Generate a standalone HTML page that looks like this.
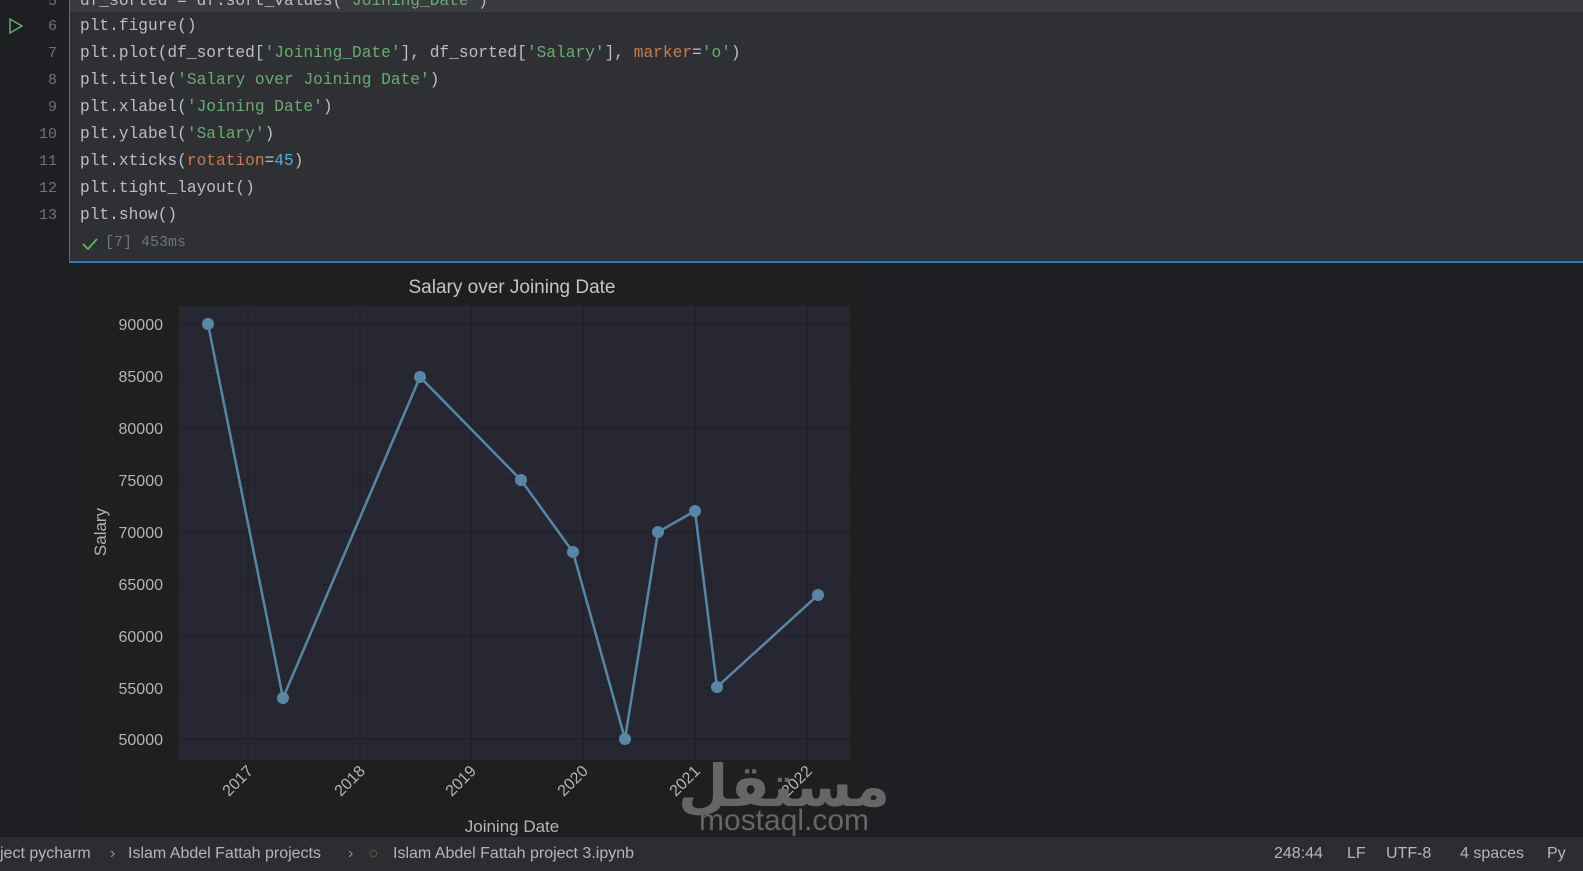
<!DOCTYPE html>
<html><head><meta charset="utf-8">
<style>
*{margin:0;padding:0;box-sizing:border-box}
body{width:1583px;height:871px;background:#1e1f22;overflow:hidden;position:relative;font-family:"Liberation Sans",sans-serif}
.cell{position:absolute;left:69px;top:0;width:1514px;height:263px;background:#2e3034;border-left:1px solid #3574c0;border-bottom:2px solid #3574c0}
.hl{position:absolute;left:0;top:0;width:1514px;height:12px;background:#393b40}
.code{position:absolute;font-family:"Liberation Mono","DejaVu Sans Mono",monospace;font-size:16.2px;color:#bcbec4;white-space:pre;left:80px}
.ln{position:absolute;font-family:"Liberation Mono","DejaVu Sans Mono",monospace;font-size:15px;color:#6f737a;text-align:right;width:57px;left:0}
.s{color:#6aab73}.k{color:#c77b54}.n{color:#5fa7d9}
.status{position:absolute;left:0;top:837px;width:1583px;height:34px;background:#2b2d30;color:#b4b6bc;font-size:16px;line-height:34px}
.status span{position:absolute;top:0}
</style></head><body>
<div class="cell"><div class="hl"></div></div>
<div class="ln" style="top:-7px">5</div>
<div class="ln" style="top:18px">6</div>
<div class="ln" style="top:45px">7</div>
<div class="ln" style="top:72px">8</div>
<div class="ln" style="top:99px">9</div>
<div class="ln" style="top:126px">10</div>
<div class="ln" style="top:153px">11</div>
<div class="ln" style="top:180px">12</div>
<div class="ln" style="top:207px">13</div>
<svg style="position:absolute;left:8px;top:17px" width="16" height="18"><path d="M2 2 L14 9 L2 16 Z" fill="none" stroke="#5fb865" stroke-width="1.4"/></svg>
<div class="code" style="top:-8px">df_sorted = df.sort_values(<span class="s">'Joining_Date'</span>)</div>
<div class="code" style="top:17px">plt.figure()</div>
<div class="code" style="top:44px">plt.plot(df_sorted[<span class="s">'Joining_Date'</span>], df_sorted[<span class="s">'Salary'</span>], <span class="k">marker</span>=<span class="s">'o'</span>)</div>
<div class="code" style="top:71px">plt.title(<span class="s">'Salary over Joining Date'</span>)</div>
<div class="code" style="top:98px">plt.xlabel(<span class="s">'Joining Date'</span>)</div>
<div class="code" style="top:125px">plt.ylabel(<span class="s">'Salary'</span>)</div>
<div class="code" style="top:152px">plt.xticks(<span class="k">rotation</span>=<span class="n">45</span>)</div>
<div class="code" style="top:179px">plt.tight_layout()</div>
<div class="code" style="top:206px">plt.show()</div>
<svg style="position:absolute;left:82px;top:237px" width="16" height="14"><path d="M1 7 L6 12 L15 2" fill="none" stroke="#5fb865" stroke-width="1.8"/></svg>
<div class="code" style="top:234px;left:105px;color:#6f737a;font-size:15px">[7] 453ms</div>

<svg style="position:absolute;left:0;top:0" width="1583" height="871" font-family="Liberation Sans, sans-serif">
<rect x="80" y="265" width="782" height="572" fill="#1f1f1f"/>
<rect x="179" y="306" width="671" height="454" fill="#262733"/>
<g stroke="#1d1e24" stroke-width="1">
<line x1="248" y1="306" x2="248" y2="760"/><line x1="360" y1="306" x2="360" y2="760"/><line x1="471" y1="306" x2="471" y2="760"/><line x1="583" y1="306" x2="583" y2="760"/><line x1="695" y1="306" x2="695" y2="760"/><line x1="807" y1="306" x2="807" y2="760"/>
<line x1="179" y1="324" x2="850" y2="324"/><line x1="179" y1="376" x2="850" y2="376"/><line x1="179" y1="428" x2="850" y2="428"/><line x1="179" y1="480" x2="850" y2="480"/><line x1="179" y1="532" x2="850" y2="532"/><line x1="179" y1="584" x2="850" y2="584"/><line x1="179" y1="636" x2="850" y2="636"/><line x1="179" y1="688" x2="850" y2="688"/><line x1="179" y1="739" x2="850" y2="739"/>
</g>
<g fill="#b4b4b4" font-size="16" text-anchor="end">
<text x="163" y="330">90000</text><text x="163" y="382">85000</text><text x="163" y="434">80000</text><text x="163" y="486">75000</text><text x="163" y="538">70000</text><text x="163" y="590">65000</text><text x="163" y="642">60000</text><text x="163" y="694">55000</text><text x="163" y="745">50000</text>
</g>
<g fill="#b4b4b4" font-size="16" text-anchor="end">
<text transform="translate(254,772) rotate(-45)">2017</text><text transform="translate(366,772) rotate(-45)">2018</text><text transform="translate(477,772) rotate(-45)">2019</text><text transform="translate(589,772) rotate(-45)">2020</text><text transform="translate(701,772) rotate(-45)">2021</text><text transform="translate(813,772) rotate(-45)">2022</text>
</g>
<text x="512" y="832" fill="#b4b4b4" font-size="17" text-anchor="middle">Joining Date</text>
<text transform="translate(106,532) rotate(-90)" fill="#b4b4b4" font-size="17" text-anchor="middle">Salary</text>
<text x="512" y="293" fill="#c4c4c4" font-size="19" text-anchor="middle">Salary over Joining Date</text>
<polyline points="208,324 283,698 420,377 521,480 573,552 625,739 658,532 695,511 717,687 818,595" fill="none" stroke="#5a86a6" stroke-width="2.5"/>
<g fill="#5a86a6">
<circle cx="208" cy="324" r="6"/><circle cx="283" cy="698" r="6"/><circle cx="420" cy="377" r="6"/><circle cx="521" cy="480" r="6"/><circle cx="573" cy="552" r="6"/><circle cx="625" cy="739" r="6"/><circle cx="658" cy="532" r="6"/><circle cx="695" cy="511" r="6"/><circle cx="717" cy="687" r="6"/><circle cx="818" cy="595" r="6"/>
</g>
<text x="784" y="806" fill="#6e6e6e" font-size="58" font-weight="bold" text-anchor="middle" font-family="DejaVu Sans, sans-serif" opacity="0.9">مستقل</text>
<text x="784" y="830" fill="#6e6e6e" font-size="30" text-anchor="middle" opacity="0.9">mostaql.com</text>
</svg>

<div class="status">
<span style="left:0">ject pycharm</span>
<span style="left:110px;color:#8c8f94">›</span>
<span style="left:128px">Islam Abdel Fattah projects</span>
<span style="left:348px;color:#8c8f94">›</span>
<span style="left:369px;color:#e08a3c;font-size:15px">◌</span>
<span style="left:393px">Islam Abdel Fattah project 3.ipynb</span>
<span style="left:1274px">248:44</span>
<span style="left:1347px">LF</span>
<span style="left:1386px">UTF-8</span>
<span style="left:1460px">4 spaces</span>
<span style="left:1547px">Py</span>
</div>
</body></html>
